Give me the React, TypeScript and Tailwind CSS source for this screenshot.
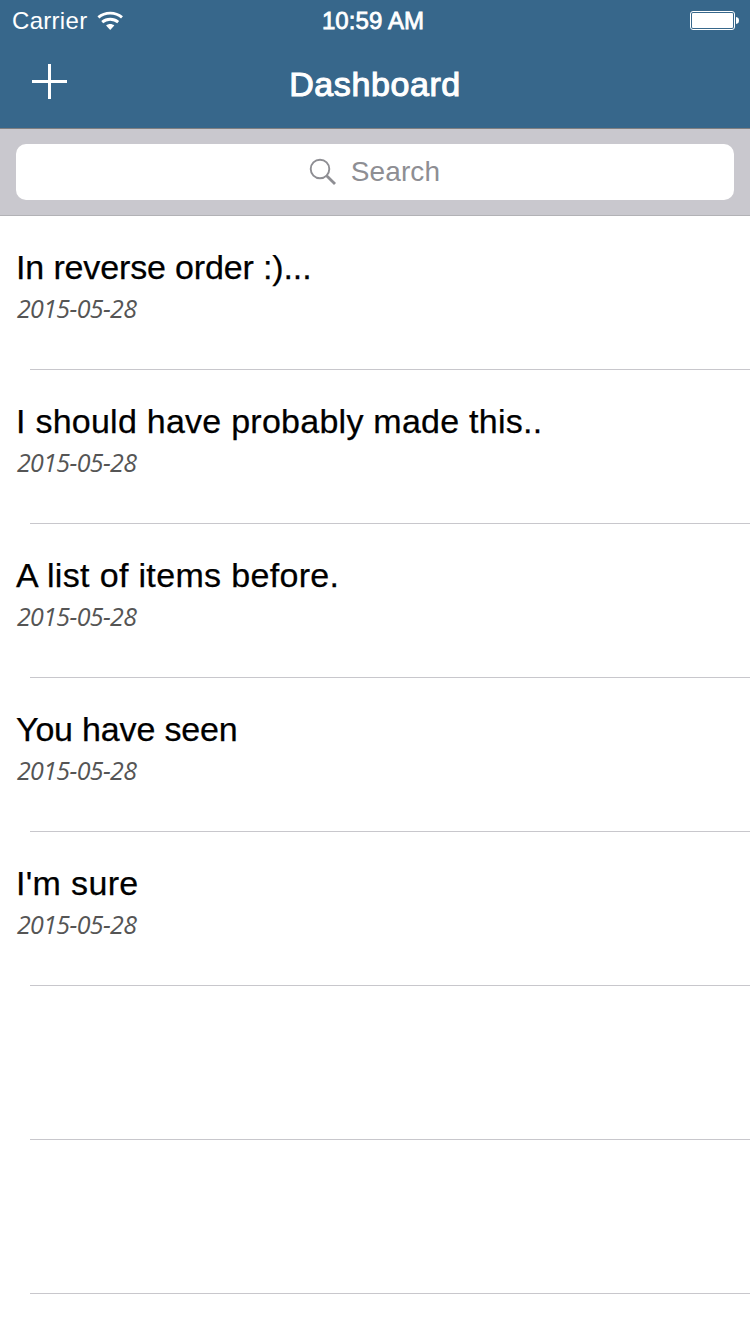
type Item = { title: string; date: string; spacing: string };

const items: Item[] = [
  { title: "In reverse order :)...", date: "2015-05-28", spacing: "tracking-[-0.14px]" },
  { title: "I should have probably made this..", date: "2015-05-28", spacing: "tracking-[0.25px]" },
  { title: "A list of items before.", date: "2015-05-28", spacing: "tracking-[0.34px]" },
  { title: "You have seen", date: "2015-05-28", spacing: "tracking-[-0.18px]" },
  { title: "I'm sure", date: "2015-05-28", spacing: "tracking-[0.34px]" },
];

function WifiIcon() {
  return (
    <svg width="26" height="20" viewBox="0 0 26 20" fill="none" stroke="#fff" strokeWidth="2.9">
      <path d="M1.4 6.4C8 0.7 18.4 0.7 25 6.4" />
      <path d="M5.2 11.1C9.8 7.3 16.6 7.3 21.2 11.1" />
      <path d="M13.2 19L9.1 14.6C11.3 12.6 15.1 12.6 17.3 14.6Z" fill="#fff" stroke="none" />
    </svg>
  );
}

function BatteryIcon() {
  return (
    <svg width="49" height="19" viewBox="0 0 49 19">
      <rect x="0.5" y="0.5" width="44" height="18" rx="2.5" fill="none" stroke="#fff" />
      <rect x="2" y="2" width="41" height="15" rx="1" fill="#fff" />
      <path d="M46 6C48.2 6.3 49 7.5 49 9.5C49 11.5 48.2 12.7 46 13Z" fill="#fff" />
    </svg>
  );
}

function SearchIcon() {
  return (
    <svg width="28" height="28" viewBox="0 0 28 28" fill="none" stroke="#8e8e93">
      <circle cx="11" cy="11" r="9.3" strokeWidth="1.9" />
      <path d="M17.4 17.4L26 26" strokeWidth="2.8" />
    </svg>
  );
}

export default function App() {
  return (
    <div className="flex h-[1334px] w-[750px] flex-col overflow-hidden bg-white font-['Liberation_Sans',Arial,sans-serif]">
      <header className="flex h-32 shrink-0 flex-col bg-[#37678b] text-white">
        <div className="grid h-10 grid-cols-3 items-center pl-3 pr-[11px]">
          <div className="flex items-center gap-2.5">
            <span className="text-[24px] leading-[42px] tracking-[0.3px]">Carrier</span>
            <WifiIcon />
          </div>
          <span className="pr-[5px] text-center text-[24px] leading-[42px] tracking-[0.1px] [-webkit-text-stroke:0.8px_#fff]">10:59 AM</span>
          <div className="flex justify-end pb-0.5">
            <BatteryIcon />
          </div>
        </div>
        <div className="grid h-[88px] grid-cols-3 items-center px-8">
          <button className="mb-1.5 h-[35px] w-[35px]" aria-label="Add">
            <svg width="35" height="35" viewBox="0 0 35 35" fill="#fff">
              <path d="M16 0H19V16H35V19H19V35H16V19H0V16H16Z" />
            </svg>
          </button>
          <h1 className="text-center text-[34px] leading-10 tracking-[0.6px] [-webkit-text-stroke:1.1px_#fff]">Dashboard</h1>
        </div>
      </header>
      <div className="h-[88px] shrink-0 border-y border-t-[#7f7f81] border-b-[#b2b2b6] bg-[#c9c8ce] px-4 pt-[15px]">
        <div className="flex h-14 items-center justify-center gap-3.5 rounded-[10px] bg-white pr-px">
          <SearchIcon />
          <span className="text-[28px] leading-8 tracking-[0.1px] text-[#8e8e93]">Search</span>
        </div>
      </div>
      <ul className="flex flex-col">
        {items.map((item) => (
          <li key={item.title} className="flex h-[154px] flex-col">
            <div className="flex flex-1 flex-col pl-4 pt-[31px]">
              <span className={`text-[34px] leading-10 text-black [-webkit-text-stroke:0.25px_#000] ${item.spacing}`}>{item.title}</span>
              <span className="mt-[5px] pl-px font-['Open_Sans',sans-serif] text-[25px] italic leading-8 tracking-[-0.65px] text-[#555]">{item.date}</span>
            </div>
            <div className="ml-[30px] h-px bg-[#c8c7cc]" />
          </li>
        ))}
        {[0, 1].map((row) => (
          <li key={row} className="flex h-[154px] flex-col justify-end">
            <div className="ml-[30px] h-px bg-[#c8c7cc]" />
          </li>
        ))}
      </ul>
    </div>
  );
}
